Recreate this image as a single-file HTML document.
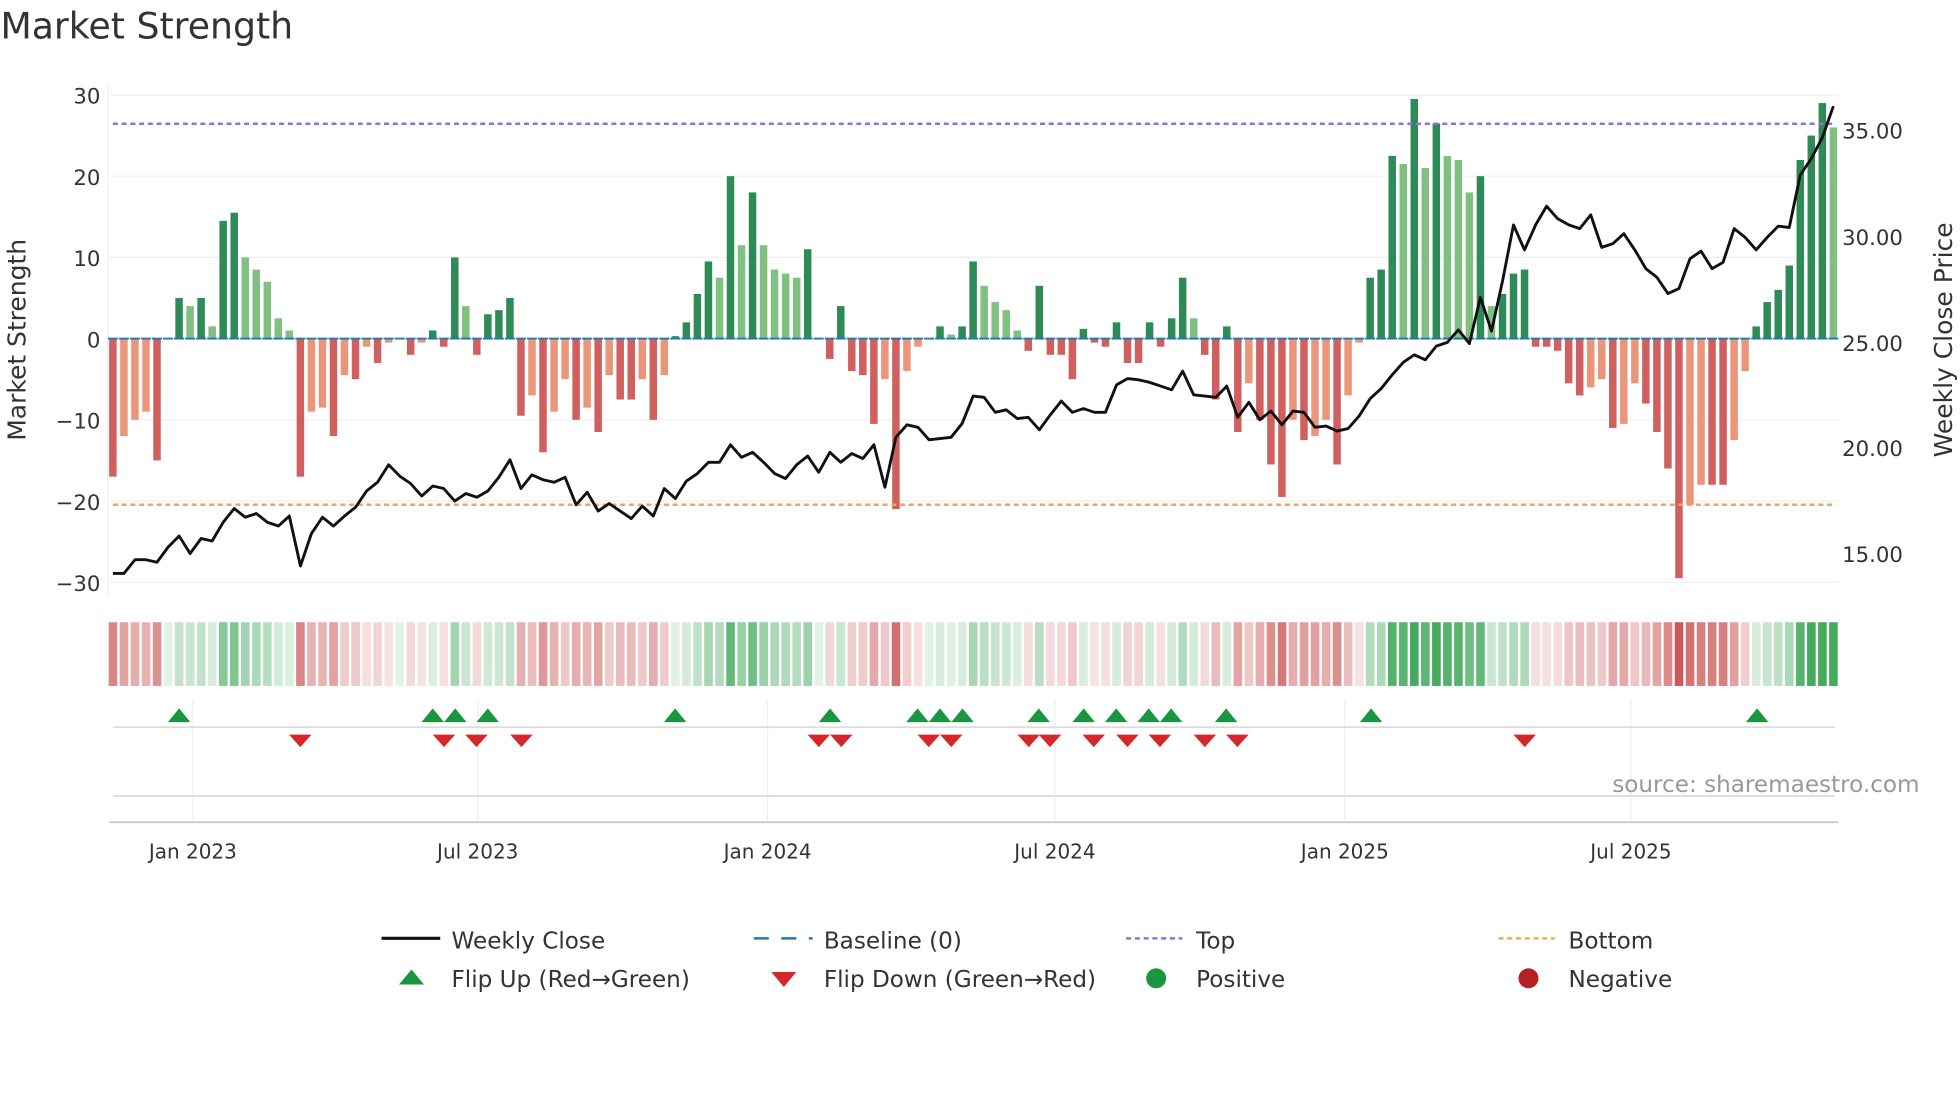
<!DOCTYPE html>
<html><head><meta charset="utf-8"><style>
html,body{margin:0;padding:0;background:#fff;}
svg{display:block;font-family:"DejaVu Sans","Liberation Sans",sans-serif;}
</style></head><body>
<svg id="s" width="1960" height="1102" viewBox="0 0 1568 882" xmlns="http://www.w3.org/2000/svg">
<rect width="1568" height="882" fill="#fff"/>
<text x="0" y="31" font-size="29" fill="#333">Market Strength</text>
<g id="grid"></g>
<g id="bars"></g>
<g id="lines"></g>
<g id="heat"></g>
<g id="marks"></g>
<g font-size="17" fill="#333" text-anchor="end">
<text x="80" y="83">30</text><text x="80" y="148">20</text><text x="80" y="213">10</text>
<text x="80" y="278">0</text><text x="80" y="343">−10</text><text x="80" y="408">−20</text><text x="80" y="473">−30</text>
</g>
<g font-size="17" fill="#333">
<text x="1474" y="111">35.00</text><text x="1474" y="196">30.00</text><text x="1474" y="281">25.00</text>
<text x="1474" y="365">20.00</text><text x="1474" y="450">15.00</text>
</g>
<text transform="translate(20,272) rotate(-90)" font-size="20" fill="#333" text-anchor="middle">Market Strength</text>
<text transform="translate(1562,272) rotate(-90)" font-size="20" fill="#333" text-anchor="middle">Weekly Close Price</text>
<g font-size="16" fill="#333" text-anchor="middle">
<text x="154" y="687">Jan 2023</text><text x="382" y="687">Jul 2023</text><text x="614" y="687">Jan 2024</text>
<text x="844" y="687">Jul 2024</text><text x="1076" y="687">Jan 2025</text><text x="1305" y="687">Jul 2025</text>
</g>
<text x="1536" y="634" font-size="18.5" fill="#999" text-anchor="end">source: sharemaestro.com</text>
<g font-size="18.5" fill="#333">
<line x1="305" y1="751" x2="352" y2="751" stroke="#111" stroke-width="2.5"/><text x="361" y="759">Weekly Close</text>
<line x1="603" y1="751" x2="650" y2="751" stroke="#1f77b4" stroke-width="2" stroke-dasharray="12,10"/><text x="659" y="759">Baseline (0)</text>
<line x1="901" y1="751" x2="946" y2="751" stroke="#9370db" stroke-width="2" stroke-dasharray="4,3"/><text x="957" y="759">Top</text>
<line x1="1199" y1="751" x2="1244" y2="751" stroke="#f4a460" stroke-width="2" stroke-dasharray="4,3"/><text x="1255" y="759">Bottom</text>
<polygon points="319,788 329,776 339,788" fill="#1a9641"/><text x="361" y="790">Flip Up (Red→Green)</text>
<polygon points="617,778 637,778 627,790" fill="#d62728"/><text x="659" y="790">Flip Down (Green→Red)</text>
<circle cx="925" cy="783" r="8" fill="#1a9641"/><text x="957" y="790">Positive</text>
<circle cx="1223" cy="783" r="8" fill="#b22222"/><text x="1255" y="790">Negative</text>
</g>
</svg>
<script>
var NS="http://www.w3.org/2000/svg";
function el(p,t,a){var e=document.createElementNS(NS,t);for(var k in a)e.setAttribute(k,a[k]);document.getElementById(p).appendChild(e);return e;}
var v=[-17,-12,-10,-9,-15,0,5,4,5,1.5,14.5,15.5,10,8.5,7,2.5,1,-17,-9,-8.5,-12,-4.5,-5,-1,-3,-0.5,0,-2,-0.5,1,-1,10,4,-2,3,3.5,5,-9.5,-7,-14,-9,-5,-10,-8.5,-11.5,-4.5,-7.5,-7.5,-5,-10,-4.5,0.3,2,5.5,9.5,7.5,20,11.5,18,11.5,8.5,8,7.5,11,0,-2.5,4,-4,-4.5,-10.5,-5,-21,-4,-1,0,1.5,0.5,1.5,9.5,6.5,4.5,3.5,1,-1.5,6.5,-2,-2,-5,1.2,-0.5,-1,2,-3,-3,2,-1,2.5,7.5,2.5,-2,-7.5,1.5,-11.5,-5.5,-10,-15.5,-19.5,-10,-12.5,-12,-10,-15.5,-7,-0.5,7.5,8.5,22.5,21.5,29.5,21,26.5,22.5,22,18,20,4,5.5,8,8.5,-1,-1,-1.5,-5.5,-7,-6,-5,-11,-10.5,-5.5,-8,-11.5,-16,-29.5,-20.5,-18,-18,-18,-12.5,-4,1.5,4.5,6,9,22,25,29,26];
var L=[459,459,448,448,450,438,429,443,431,433,418,407,414,411,418,421,413,453,427,414,421,413,406,393,386,372,381,387,397,389,391,401,395,398,393,382,368,391,380,384,386,382,404,394,409,403,409,415,405,413,391,399,385,379,370,370,356,366,362,370,379,383,372,365,378,362,370,363,367,356,390,350,340,342,352,351,350,339,317,318,330,328,335,334,344,332,321,330,327,330,330,308,303,304,306,309,312,297,316,317,318,309,334,322,336,329,340,329,330,342,341,345,343,333,319,311,300,290,284,288,277,274,264,275,238,265,225,180,200,180,165,175,180,183,172,198,195,187,200,215,222,235,231,207,201,215,210,183,190,200,190,181,182,140,127,110,85];
[76,141,206,271,336,401,466].forEach(function(y){el('grid','line',{x1:87,x2:1471,y1:y,y2:y,stroke:'#eef0f3','stroke-width':1});});
[154,382,614,844,1076,1305].forEach(function(x){el('grid','line',{x1:x,x2:x,y1:560,y2:658,stroke:'#eef0f3','stroke-width':1});});
el('grid','line',{x1:90,x2:1468,y1:582,y2:582,stroke:'#ddd','stroke-width':1.5});
el('grid','line',{x1:90,x2:1468,y1:637,y2:637,stroke:'#ddd','stroke-width':1.5});
el('grid','line',{x1:87,x2:1471,y1:658,y2:658,stroke:'#ccc','stroke-width':1.5});
el('grid','line',{x1:86,x2:86,y1:66,y2:478,stroke:'#eef0f3','stroke-width':1});
var n=v.length,st=1377/(n-1);
for(var i=0;i<n;i++){
 var x=90+i*st,val=v[i],p=i?v[i-1]:0,c;
 if(val>=0)c=(val>=p)?'#2e8b57':'#80c080';else c=(val<=p)?'#d06060':'#e9967a';
 var y0=271,y1=271-val*6.5;
 if(Math.abs(val)>0.2)el('bars','rect',{x:x-3,y:Math.min(y0,y1),width:6,height:Math.abs(y1-y0),fill:c});
 el('bars','line',{x1:x-4,x2:x+4,y1:271,y2:271,stroke:'#1f77b4','stroke-width':1.5});
 var t=Math.min(1,Math.abs(val)/25)*0.8+0.15,r,gg,b;
 if(val>=0){r=Math.round(255+(58-255)*t);gg=Math.round(255+(166-255)*t);b=Math.round(255+(85-255)*t);}
 else{r=Math.round(255+(200-255)*t);gg=Math.round(255+(80-255)*t);b=Math.round(255+(80-255)*t);}
 el('heat','rect',{x:x-3.4,y:498,width:6.9,height:51,fill:'rgb('+r+','+gg+','+b+')'});
}
el('lines','line',{x1:90,x2:1468,y1:99,y2:99,stroke:'#9370db','stroke-width':2,'stroke-dasharray':'4,3'});
el('lines','line',{x1:90,x2:1468,y1:404,y2:404,stroke:'#f4a460','stroke-width':2,'stroke-dasharray':'4,3'});
var ls=1377/(L.length-1),pts=L.map(function(y,i){return (90+i*ls).toFixed(1)+','+y;}).join(' ');
el('lines','polyline',{points:pts,fill:'none',stroke:'#111','stroke-width':2.3,'stroke-linejoin':'round'});
[143,346,364,390,540,664,734,752,770,831,867,893,919,937,981,1097,1406].forEach(function(x){el('marks','polygon',{points:(x-9)+',578 '+x+',567 '+(x+9)+',578',fill:'#1a9641'});});
[240,355,381,417,655,673,743,761,823,840,875,902,928,964,990,1220].forEach(function(x){el('marks','polygon',{points:(x-9)+',588 '+(x+9)+',588 '+x+',598',fill:'#d62728'});});
</script>
</body></html>
